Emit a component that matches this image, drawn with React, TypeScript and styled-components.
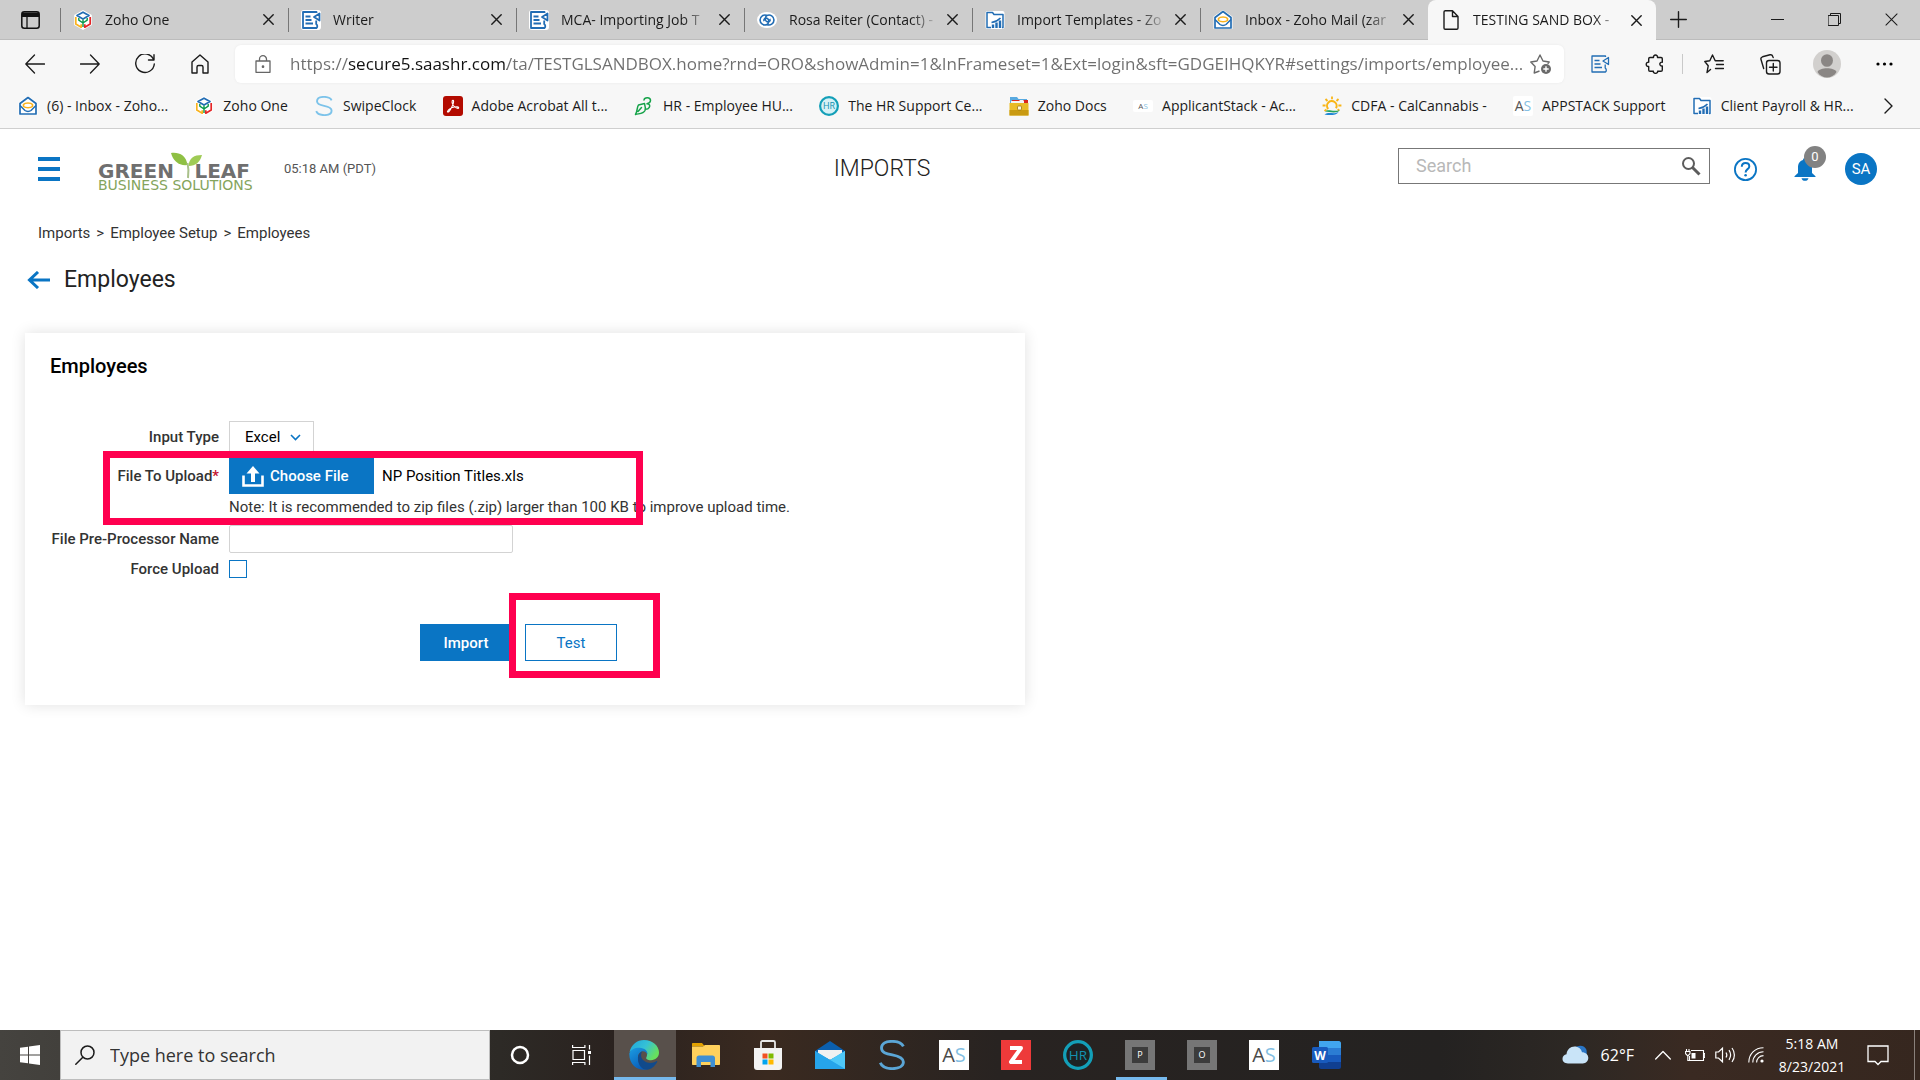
import React from "react";
import styled, { createGlobalStyle, css } from "styled-components";

const BLUE = "#0a75c4";
const UI = `"Open Sans", "Noto Sans", sans-serif`;
const APP = `Roboto, "Liberation Sans", sans-serif`;

const Global = createGlobalStyle`
  * { box-sizing: border-box; }
  body { margin: 0; background: #fff; font-family: ${APP}; }
  button, input, select { font: inherit; color: inherit; margin: 0; }
  button { padding: 0; border: 0; background: none; cursor: pointer; }
  svg { display: block; flex: none; }
`;

const Screen = styled.div`
  display: flex;
  flex-direction: column;
  min-height: 100vh;
`;

/* ---------- browser chrome ---------- */

const TabStrip = styled.div`
  display: flex;
  align-items: stretch;
  height: 40px;
  background: #cdcdcd;
  border-bottom: 1px solid #bcbcbc;
  font: 14px/20px ${UI};
  color: #1b1b1b;
`;

const TabActions = styled.button`
  flex: none;
  width: 60px;
  display: grid;
  place-items: center;
`;

const Tab = styled.div<{ $active?: boolean }>`
  flex: 0 1 228px;
  min-width: 0;
  display: flex;
  align-items: center;
  padding: 0 11px 0 13px;
  ${(p) =>
    p.$active
      ? css`
          background: #f7f7f7;
          border-radius: 8px 8px 0 0;
          margin-bottom: -1px;
        `
      : css`
          background: linear-gradient(#767676, #767676) 0 50% / 1px 24px no-repeat;
        `}
`;

const TabTitle = styled.span`
  flex: 1;
  min-width: 0;
  margin: 0 4px 0 12px;
  overflow: hidden;
  white-space: nowrap;
  mask-image: linear-gradient(90deg, #000 calc(100% - 28px), transparent);
`;

const TabClose = styled.button`
  display: grid;
  place-items: center;
  width: 18px;
  height: 20px;
`;

const NewTab = styled.button`
  width: 44px;
  display: grid;
  place-items: center;
`;

const WindowControls = styled.div`
  margin-left: auto;
  display: flex;
`;

const WindowButton = styled.button`
  width: 57px;
  display: grid;
  place-items: center;
`;

const Toolbar = styled.div`
  display: flex;
  align-items: center;
  height: 48px;
  padding: 0 11px 0 7px;
  background: #f7f7f7;
`;

const ToolButton = styled.button<{ $w?: number }>`
  flex: none;
  width: ${(p) => p.$w ?? 55}px;
  height: 40px;
  display: grid;
  place-items: center;
`;

const AddressBar = styled.div`
  flex: 1;
  min-width: 0;
  height: 38px;
  margin: 0 8px;
  display: flex;
  align-items: center;
  gap: 18px;
  padding: 0 12px 0 19px;
  background: #fff;
  border-radius: 6px;
  box-shadow: 0 0 3px rgba(0, 0, 0, 0.06);
`;

const AddressInput = styled.input`
  flex: 1;
  min-width: 0;
  height: 30px;
  margin-right: -14px;
  padding: 0;
  border: 0;
  outline: 0;
  font: 17px/30px ${UI};
  color: #6e6e6e;
  background: linear-gradient(90deg, #6e6e6e 58px, #111 58px, #111 217px, #6e6e6e 217px);
  background-clip: text;
  -webkit-text-fill-color: transparent;
`;

const ToolDivider = styled.span`
  width: 1px;
  height: 20px;
  background: #c9c9c9;
`;

const Bookmarks = styled.nav`
  display: flex;
  align-items: center;
  justify-content: space-between;
  height: 41px;
  padding: 0 24px 4px 18px;
  background: #f7f7f7;
  border-bottom: 1px solid #cfcfcf;
`;

const Bookmark = styled.a`
  display: flex;
  align-items: center;
  gap: 9px;
  font: 14px/20px ${UI};
  color: #1b1b1b;
  text-decoration: none;
  white-space: nowrap;
`;

/* ---------- application ---------- */

const Page = styled.div`
  flex: 1;
`;

const Header = styled.header`
  display: flex;
  align-items: center;
  justify-content: space-between;
  height: 80px;
  padding: 0 43px 0 38px;
`;

const HeaderLeft = styled.div`
  display: flex;
  align-items: center;
`;

const MenuButton = styled.button`
  width: 22px;
  height: 24px;
  margin-right: 38px;
  border-block: 4px solid ${BLUE};
  background: linear-gradient(${BLUE}, ${BLUE}) 0 50% / 100% 4px no-repeat;
`;

const Logo = styled.div`
  position: relative;
  width: 152px;
  margin-right: 34px;
  font-family: "DejaVu Sans", sans-serif;
`;

const LogoName = styled.div`
  display: flex;
  justify-content: space-between;
  padding-top: 15px;
  font-size: 20px;
  font-weight: 700;
  line-height: 16px;
  color: #6f6f6f;
`;

const LogoTag = styled.div`
  font-size: 14px;
  line-height: 12px;
  color: #84a45c;
  white-space: nowrap;
`;

const LogoLeaf = styled.svg`
  position: absolute;
  left: 72px;
  top: 4px;
`;

const Clock = styled.span`
  font-size: 13px;
  line-height: 20px;
  color: #555;
`;

const PageName = styled.h1`
  margin: 0;
  padding-right: 10px;
  font-size: 23px;
  font-weight: 300;
  line-height: 28px;
  color: #222;
`;

const HeaderRight = styled.div`
  display: flex;
  align-items: center;
  justify-content: flex-end;
`;

const SearchBox = styled.div`
  display: flex;
  align-items: center;
  width: 312px;
  height: 36px;
  margin: 0 24px 6px 0;
  padding: 0 8px 0 17px;
  border: 1px solid #777;
`;

const SearchInput = styled.input`
  flex: 1;
  min-width: 0;
  border: 0;
  outline: 0;
  padding: 0;
  font-size: 18px;
  line-height: 24px;
  background: none;
  &::placeholder {
    color: #b8b8b8;
  }
`;

const HeaderButton = styled.button`
  position: relative;
  display: grid;
  place-items: center;
`;

const BellButton = styled(HeaderButton)`
  margin: 0 29px 0 37px;
`;

const Badge = styled.span`
  position: absolute;
  left: 10px;
  top: -11px;
  width: 22px;
  height: 22px;
  border-radius: 50%;
  background: #828282;
  color: #fff;
  font-size: 13px;
  line-height: 22px;
  text-align: center;
`;

const Avatar = styled.button`
  width: 32px;
  height: 32px;
  border-radius: 50%;
  background: ${BLUE};
  color: #fff;
  font-size: 15px;
`;

const Crumbs = styled.nav`
  display: flex;
  gap: 6px;
  padding: 13px 38px 0;
  font-size: 15px;
  line-height: 22px;
  color: #333;
`;

const Crumb = styled.a`
  color: inherit;
  text-decoration: none;
`;

const TitleBar = styled.div`
  display: flex;
  align-items: center;
  gap: 14px;
  padding: 21px 27px 0;
`;

const Title = styled.h2`
  margin: 0;
  font-size: 23px;
  font-weight: 400;
  line-height: 30px;
  color: #222;
`;

const Card = styled.section`
  position: relative;
  width: 1000px;
  max-width: calc(100% - 50px);
  margin: 38px 25px 0;
  padding: 20px 25px 44px;
  background: #fff;
  box-shadow: 0 0 14px rgba(0, 0, 0, 0.12);
`;

const CardTitle = styled.h3`
  margin: 0 0 42px;
  font-size: 20px;
  font-weight: 500;
  line-height: 26px;
  color: #000;
`;

const Form = styled.form`
  display: grid;
  grid-template-columns: 169px auto;
  column-gap: 10px;
  justify-content: start;
  align-items: center;
  font-size: 15px;
  line-height: 20px;
`;

const Label = styled.label`
  text-align: right;
  font-weight: 500;
  color: #333;
  white-space: nowrap;
`;

const Required = styled.span`
  color: #c4122f;
`;

const SelectWrap = styled.div`
  position: relative;
  width: 85px;
  height: 32px;
`;

const Select = styled.select`
  appearance: none;
  width: 100%;
  height: 100%;
  padding: 0 0 0 15px;
  border: 1px solid #d3d3d3;
  border-radius: 0;
  background: #fff;
  color: #000;
`;

const SelectArrow = styled.svg`
  position: absolute;
  right: 13px;
  top: 13px;
  pointer-events: none;
`;

const FileRow = styled.div`
  display: flex;
  align-items: center;
  gap: 8px;
  padding: 5px 0;
  color: #000;
`;

const ChooseButton = styled.button`
  display: flex;
  align-items: center;
  gap: 6px;
  width: 145px;
  height: 36px;
  padding-left: 13px;
  background: ${BLUE};
  color: #fff;
  font-weight: 500;
`;

const Note = styled.p`
  grid-column: 2;
  margin: 0;
  padding-bottom: 10px;
  line-height: 16px;
  color: #333;
`;

const TextInput = styled.input`
  width: 284px;
  height: 28px;
  border: 1px solid #d3d3d3;
  border-radius: 2px;
`;

const CheckRow = styled.div`
  display: flex;
  align-items: center;
  height: 31px;
`;

const Check = styled.input`
  appearance: none;
  width: 18px;
  height: 18px;
  border: 1px solid ${BLUE};
`;

const Actions = styled.div`
  display: flex;
  gap: 13px;
  margin: 40px 0 0 370px;
`;

const ActionButton = styled.button<{ $primary?: boolean }>`
  width: 92px;
  height: 37px;
  border: 1px solid ${BLUE};
  background: ${(p) => (p.$primary ? BLUE : "#fff")};
  color: ${(p) => (p.$primary ? "#fff" : BLUE)};
  font-size: 15px;
  font-weight: ${(p) => (p.$primary ? 500 : 400)};
`;

const Highlight = styled.div<{ $x: number; $y: number; $w: number; $h: number }>`
  position: absolute;
  left: ${(p) => p.$x}px;
  top: ${(p) => p.$y}px;
  width: ${(p) => p.$w}px;
  height: ${(p) => p.$h}px;
  border: 7px solid #ff004f;
  pointer-events: none;
`;

/* ---------- taskbar ---------- */

const Taskbar = styled.footer`
  display: flex;
  align-items: stretch;
  height: 50px;
  background: linear-gradient(90deg, #45433f 0, #2d2a26 26%, #2a221f 32%, #3a2a20 40%, #282321 52%, #242221 75%, #2d2824 82%, #3a2a22 88%, #36271f 100%);
  color: #fff;
  font-family: ${UI};
`;

const StartButton = styled.button`
  flex: none;
  width: 60px;
  display: grid;
  place-items: center;
`;

const TaskSearch = styled.div`
  flex: 0 1 430px;
  min-width: 0;
  display: flex;
  align-items: center;
  gap: 15px;
  padding: 0 14px;
  background: #f2f2f2;
  border: 1px solid #bdbdbd;
`;

const TaskSearchInput = styled.input`
  flex: 1;
  min-width: 0;
  padding: 0;
  border: 0;
  outline: 0;
  background: none;
  font-size: 18px;
  line-height: 26px;
  &::placeholder {
    color: #333;
  }
`;

const TaskButton = styled.button<{ $state?: "active" | "open" }>`
  flex: none;
  width: 62px;
  padding-right: 2px;
  display: grid;
  place-items: center;
  background: ${(p) =>
    p.$state === "active"
      ? "linear-gradient(#76b9ed, #76b9ed) 0 100% / 100% 3px no-repeat #58504b"
      : p.$state === "open"
      ? "linear-gradient(#76b9ed, #76b9ed) 50% 100% / 51px 3px no-repeat"
      : "none"};
`;

const Tile = styled.span<{ $bg: string; $color?: string; $size?: number }>`
  display: grid;
  place-items: center;
  width: 30px;
  height: 30px;
  background: ${(p) => p.$bg};
  color: ${(p) => p.$color ?? "#fff"};
  font-size: ${(p) => p.$size ?? 18}px;
  line-height: 30px;
`;

const KeyCap = styled.span`
  display: grid;
  place-items: center;
  width: 16px;
  height: 16px;
  background: #3c3c3c;
  font-size: 9px;
  line-height: 16px;
`;

const Pale = styled.span`
  color: #85bfe3;
`;

const SmallAS = styled.span<{ $tiny?: boolean }>`
  display: block;
  width: 20px;
  background: #fff;
  border-radius: 2px;
  font-size: ${(p) => (p.$tiny ? 8 : 14)}px;
  line-height: ${(p) => (p.$tiny ? 12 : 20)}px;
  color: #555;
  text-align: center;
`;

const Tray = styled.div`
  margin-left: auto;
  display: flex;
  align-items: center;
  padding-right: 5px;
`;

const TrayButton = styled.button<{ $w: number }>`
  width: ${(p) => p.$w}px;
  height: 50px;
  display: grid;
  place-items: center;
`;

const Weather = styled.button`
  display: flex;
  align-items: center;
  gap: 12px;
  margin-right: 12px;
  font-size: 16px;
`;

const DateTime = styled.div`
  width: 80px;
  font-size: 14px;
  line-height: 23px;
  text-align: center;
`;

const TrayEdge = styled.span`
  align-self: stretch;
  width: 1px;
  margin-left: 10px;
  background: #8a817b;
`;

/* ---------- drawings ---------- */

const Line = ({ s = 20, w = 1, c = "#1b1b1b", box = 20, children }: any) => (
  <svg width={s} height={s} viewBox={`0 0 ${box} ${box}`} fill="none" stroke={c} strokeWidth={w} strokeLinecap="round" strokeLinejoin="round">
    {children}
  </svg>
);

const CloseIcon = ({ s = 11, w = 1.4 }: any) => (
  <Line s={s} box={11} w={w}>
    <path d="M.8.8l9.4 9.4M10.2.8L.8 10.2" />
  </Line>
);

const ZohoOne = () => (
  <svg width="20" height="20" viewBox="0 0 20 20" fill="none" strokeWidth="1.700" strokeLinejoin="round">
    <path d="M10 0l8.800 4.900v10.200L10 20l-8.800-4.900V4.900z" fill="#fff" />
    <path d="M4 5.600L10 2.200l6 3.400L10 9z" stroke="#226db4" />
    <path d="M2.800 7v7l5.400 3.200v-3" stroke="#f9b21d" />
    <path d="M17.200 7v7l-5.400 3.200v-3" stroke="#e42527" />
    <path d="M10 9.500V17M10 13L5.800 10.200V8M10 13l4.200-2.800V8" stroke="#089949" strokeWidth="1.400" />
  </svg>
);

const WriterIcon = ({ plain }: { plain?: boolean }) => (
  <svg width="20" height="20" viewBox="0 0 20 20" fill="none" stroke="#226db4" strokeWidth={plain ? 1.3 : 1.8} strokeLinejoin="round">
    {!plain && <rect x="0" y="0" width="20" height="20" rx="3" fill="#fff" stroke="none" />}
    <path d="M15.500 3V2H2v16h13.500c1.200-1 1-3-.3-4v-3.500" />
    <path d="M4.500 6.500h5M4.500 10h6M4.500 13.500h7.500" />
    <path d="M18.500 3.500v7L13 7z" />
  </svg>
);

const LinkIcon = () => (
  <svg width="20" height="20" viewBox="0 0 20 20" fill="none" stroke="#226db4" strokeWidth="1.600">
    <ellipse cx="10" cy="10" rx="10" ry="8" fill="#fff" stroke="none" />
    <path d="M10 5.400a5 5 0 1 0 0 9.200c1.800-1.200 2.500-4.500.6-6-2-1.300-4.400.4-3.400 2.600" />
    <path d="M10 14.600a5 5 0 1 0 0-9.200c-1.800 1.200-2.500 4.500-.6 6 2 1.300 4.400-.4 3.400-2.600" />
  </svg>
);

const FolderChart = () => (
  <svg width="20" height="20" viewBox="0 0 20 20" fill="none" stroke="#226db4" strokeWidth="1.500" strokeLinejoin="round">
    <rect x=".5" y="1" width="19" height="18" rx="2" fill="#fff" stroke="none" />
    <path d="M6 17.500H2v-15h5.500L9 4.500h9v13h-1" />
    <path d="M8 18v-3.500M11.500 18v-5.500M15 18v-7.500" strokeWidth="2.400" />
    <path d="M6.500 12.500c3.500-.5 6.500-2 9-4.500" strokeWidth="1.600" />
  </svg>
);

const MailIcon = () => (
  <svg width="20" height="20" viewBox="0 0 20 20" fill="none" strokeLinejoin="round">
    <path d="M10 0l9.500 6.500V19H.5V6.500z" fill="#fff" />
    <path d="M2 7.500l8-6 8 6V18H2z" stroke="#226db4" strokeWidth="1.700" />
    <path d="M2 9.500l5 5c1.500 1.200 4.500 1.200 6 0l5-5" stroke="#226db4" strokeWidth="1.500" />
    <path d="M5.500 10.500V8.500c1.500-2 7.500-2 9 0v2c-2 1.600-7 1.600-9 0z" stroke="#f9b21d" strokeWidth="1.600" />
  </svg>
);

const SwipeS = ({ s = 20, c = "#7cc3ea" }: any) => (
  <svg width={s} height={s} viewBox="0 0 20 20" fill="none" stroke={c} strokeWidth="1.900">
    <path d="M17.600 4.300C16.500 2 13.500.9 10 .9 6 .9 3 2.500 3 5.300c0 3 3 3.800 7.200 4.600 4.300.8 7.400 1.900 7.400 4.800 0 2.700-3 4.400-7.400 4.400-3.800 0-6.900-1.100-8-3.900" />
  </svg>
);

const Acrobat = () => (
  <svg width="20" height="20" viewBox="0 0 20 20">
    <rect width="20" height="20" rx="3" fill="#b30b00" />
    <path d="M4.500 15.500c1-2 4.300-4 7-4.500 2-.4 4.300-.2 4.200.8-.2 1-2.200.6-3.700-.7C10 9.400 8.800 6.500 9.200 5c.3-1 1.500-.8 1.400.6-.2 3-3 8.400-4.600 9.900-.8.800-1.800.6-1.500 0z" fill="none" stroke="#fff" strokeWidth="1.100" />
  </svg>
);

const HrHub = () => (
  <svg width="20" height="20" viewBox="0 0 20 20" fill="none" stroke="#16a34a" strokeWidth="1.500" strokeLinecap="round" strokeLinejoin="round">
    <path d="M10 4c.5-3 6.500-3 6.500.5 0 2-1.500 2.700-3.500 3.200 2.500.3 3.300 1.800 2.300 3.600-.8 1.400-2 1.900-3.600 1.900" />
    <path d="M10.500 7.500L4.500 9c-1.700 2-.8 6-3 9.500 3-1 8-.5 9.500-4 .8-2.200.2-4.500-.5-7zM7.500 11.500L4 15.500" />
  </svg>
);

const HrRound = ({ s = 20 }: any) => (
  <svg width={s} height={s} viewBox="0 0 20 20">
    <circle cx="10" cy="10" r="8.900" fill={s > 20 ? "#1d2224" : "#d6f1f6"} stroke="#139fb8" strokeWidth="2.200" />
    <text x="10" y="13.300" textAnchor="middle" fontFamily="Open Sans, sans-serif" fontSize="9" fill="#1391b0">HR</text>
  </svg>
);

const DocsFolder = () => (
  <svg width="20" height="20" viewBox="0 0 20 20">
    <path d="M1 1h7l1.500 2H18v6H1z" fill="#58a9e0" />
    <path d="M3 4h16v5H3z" fill="#d9261c" />
    <path d="M2 5h8l1-1h3l1 1v2H2z" fill="#f4f4f4" />
    <path d="M.5 7h19v12.500H.5z" fill="#e8bb25" />
    <path d="M.5 14h19v5.500H.5z" fill="#c99a12" />
    <rect x="8.500" y="10" width="4" height="4" rx="1" fill="#fff8dc" stroke="#9a7610" strokeWidth=".8" />
  </svg>
);

const SunIcon = () => (
  <svg width="20" height="20" viewBox="0 0 20 20" fill="none">
    <path d="M6.200 13a4.800 4.800 0 1 1 7.800-.8" stroke="#f9b515" strokeWidth="2" />
    <path d="M10 .5v2.700M3.500 3l2 2M16.500 3l-2 2M.6 9.500h3M16.400 9.500h3M2.500 15l2-1.500M17.300 14.500l-1.700-1.200" stroke="#f9b515" strokeWidth="1.800" />
    <path d="M3 15.500c4-3.200 7 1 15-1.500-3 4-10 2-15 1.500z" fill="#27a35a" />
    <path d="M2.500 18.500c5-3.500 8 .5 14-2.500-2 3.500-9 3.500-14 2.500z" fill="#1f86d6" />
  </svg>
);

const PageIcon = () => (
  <Line w={1.4}>
    <path d="M4 .8h7.500L17 6.500V18a1.200 1.200 0 0 1-1.200 1.200H4.200A1.200 1.200 0 0 1 3 18V2A1.200 1.200 0 0 1 4.200.8M11.500.8v5.700H17" />
  </Line>
);

const EdgeLogo = () => (
  <svg width="30" height="30" viewBox="0 0 30 30">
    <defs>
      <linearGradient id="edgeTop" x1="0" y1="0" x2="1" y2="0.5">
        <stop offset="0" stopColor="#1ea6dc" />
        <stop offset=".55" stopColor="#35c1d6" />
        <stop offset="1" stopColor="#67e05d" />
      </linearGradient>
      <linearGradient id="edgeBody" x1="0" y1="0" x2="0.6" y2="1">
        <stop offset="0" stopColor="#1b9de2" />
        <stop offset="1" stopColor="#0a5cb8" />
      </linearGradient>
    </defs>
    <path d="M.6 12C2.200 4.600 8.200 0 15 0c8.500 0 15 5.800 15 12.600 0 4.700-3.700 7.600-8 7.600-3.500 0-5.300-1.300-4.700-2.700 1.600-2.500 1.200-8-5.800-8-4.500 0-8.600 1.600-10.900 2.500z" fill="url(#edgeTop)" />
    <path d="M.3 13.500C1.500 9.500 6 7.500 10.500 7.700c5.500.2 8.300 3.500 8 7-.6-2.600-3.500-4-6-3.200-2.500.9-4 4-3.500 7.500.8 5.500 5.500 9.800 10 10-7 2.600-19-1.500-18.700-15.500z" fill="url(#edgeBody)" />
    <path d="M9 17.500c.5-3.700 2.500-5.700 4.500-6-2.200 2-2 6.500 1.500 9.300 3.700 3 9 2.700 12.200.5.900-.6 1.300-.1.900.7C25.500 26.800 21.500 30 17 29.600 11.500 29 8.500 23 9 17.500z" fill="#114a8b" />
  </svg>
);

const Explorer = () => (
  <svg width="28" height="24" viewBox="0 0 28 24">
    <path d="M0 1c0-.6.400-1 1-1h9l3 3.500H0z" fill="#e2a100" />
    <path d="M0 3.500h11L13 2h14c.6 0 1 .4 1 1v18c0 .6-.4 1-1 1H1c-.6 0-1-.4-1-1z" fill="#ffd15c" />
    <path d="M4.500 24V15c0-1.500 1-2.500 2.500-2.500h13.500c1.500 0 2.500 1 2.500 2.500v9h-4.500v-5h-9.500v5z" fill="#3f8fd2" />
  </svg>
);

const Store = () => (
  <svg width="28" height="30" viewBox="0 0 28 30">
    <path d="M7 10V2.500C7 1.500 7.500 1 8.500 1h11c1 0 1.500.5 1.500 1.500V10" fill="none" stroke="#e9e9e9" strokeWidth="1.800" />
    <path d="M0 8h28v19c0 2-1 3-3 3H3c-2 0-3-1-3-3z" fill="#f3f3f3" />
    <path d="M8.500 13.500h5v5h-5z" fill="#f25022" />
    <path d="M14.500 13.500h5v5h-5z" fill="#7fba00" />
    <path d="M8.500 19.500h5v5h-5z" fill="#00a4ef" />
    <path d="M14.500 19.500h5v5h-5z" fill="#ffb900" />
  </svg>
);

const MailApp = () => (
  <svg width="30" height="28" viewBox="0 0 30 28">
    <path d="M15 0l15 10v4H0v-4z" fill="#0b5fae" />
    <path d="M3 9h24v4l-12 6L3 13z" fill="#f1f1f1" />
    <path d="M0 10l15 9 15-9v18H0z" fill="#2fb3f2" />
    <path d="M15 19l15-9v18z" fill="#4fc8f8" />
    <path d="M15 19l15 9H0V10z" fill="#26a4ea" />
  </svg>
);

const WordApp = () => (
  <svg width="29" height="28" viewBox="0 0 29 28">
    <path d="M7 0h20c1 0 2 1 2 2v5H7z" fill="#41a5ee" />
    <path d="M7 7h22v7H7z" fill="#2b7cd3" />
    <path d="M7 14h22v7H7z" fill="#185abd" />
    <path d="M7 21h22v5c0 1-1 2-2 2H9c-1 0-2-1-2-2z" fill="#103f91" />
    <rect y="6" width="16" height="16" rx="1.500" fill="#185abd" />
    <text x="8" y="18.500" textAnchor="middle" fontFamily="Open Sans, sans-serif" fontWeight="700" fontSize="12" fill="#fff">W</text>
  </svg>
);

const tabs = [
  { title: "Zoho One", icon: <ZohoOne /> },
  { title: "Writer", icon: <WriterIcon /> },
  { title: "MCA- Importing Job T", icon: <WriterIcon /> },
  { title: "Rosa Reiter (Contact) -", icon: <LinkIcon /> },
  { title: "Import Templates - Zo", icon: <FolderChart /> },
  { title: "Inbox - Zoho Mail (zar", icon: <MailIcon /> },
  { title: "TESTING SAND BOX -", icon: <PageIcon />, active: true },
];

const bookmarks = [
  { title: "(6) - Inbox - Zoho...", icon: <MailIcon /> },
  { title: "Zoho One", icon: <ZohoOne /> },
  { title: "SwipeClock", icon: <SwipeS /> },
  { title: "Adobe Acrobat All t...", icon: <Acrobat /> },
  { title: "HR - Employee HU...", icon: <HrHub /> },
  { title: "The HR Support Ce...", icon: <HrRound /> },
  { title: "Zoho Docs", icon: <DocsFolder /> },
  { title: "ApplicantStack - Ac...", icon: <SmallAS $tiny>A<Pale>S</Pale></SmallAS> },
  { title: "CDFA - CalCannabis -", icon: <SunIcon /> },
  { title: "APPSTACK Support", icon: <SmallAS>A<Pale>S</Pale></SmallAS> },
  { title: "Client Payroll & HR...", icon: <FolderChart /> },
];

const asTile = (
  <Tile $bg="#fff" $color="#4a4a4a" $size={20}>
    <span>A<Pale>S</Pale></span>
  </Tile>
);

const taskApps: { name: string; icon: React.ReactNode; state?: "active" | "open" }[] = [
  { name: "Microsoft Edge", icon: <EdgeLogo />, state: "active" },
  { name: "File Explorer", icon: <Explorer /> },
  { name: "Microsoft Store", icon: <Store /> },
  { name: "Mail", icon: <MailApp /> },
  { name: "SwipeClock", icon: <SwipeS s={30} c="#5ba6d6" /> },
  { name: "ApplicantStack", icon: asTile },
  {
    name: "Zoho",
    icon: (
      <Tile $bg="#ee3a3a">
        <svg width="16" height="20" viewBox="0 0 16 20" fill="none" stroke="#fff" strokeWidth="4" strokeLinejoin="round">
          <path d="M2 3h11L3 17h11" />
        </svg>
      </Tile>
    ),
  },
  { name: "HR Support Center", icon: <HrRound s={30} /> },
  { name: "Payroll", icon: <Tile $bg="#767676"><KeyCap>P</KeyCap></Tile>, state: "open" },
  { name: "Onboarding", icon: <Tile $bg="#767676"><KeyCap>O</KeyCap></Tile> },
  { name: "ApplicantStack Support", icon: asTile },
  { name: "Word", icon: <WordApp /> },
];

export default function App() {
  return (
    <Screen>
      <Global />

      <TabStrip>
        <TabActions aria-label="Tab actions">
          <svg width="19" height="18" viewBox="0 0 19 18">
            <rect x=".8" y=".8" width="17.400" height="16.400" rx="2.500" fill="none" stroke="#111" strokeWidth="1.500" />
            <path d="M1 1.500h17V6H1z" fill="#111" />
            <path d="M6 6v11" stroke="#111" strokeWidth="1.300" />
          </svg>
        </TabActions>
        {tabs.map((t) => (
          <Tab key={t.title} $active={t.active}>
            {t.icon}
            <TabTitle>{t.title}</TabTitle>
            <TabClose aria-label={`Close ${t.title}`}><CloseIcon /></TabClose>
          </Tab>
        ))}
        <NewTab aria-label="New tab">
          <Line s={17} box={17} w={1.4}><path d="M8.500.7v15.600M.7 8.500h15.600" /></Line>
        </NewTab>
        <WindowControls>
          <WindowButton aria-label="Minimize"><Line s={13} box={13}><path d="M0 6.500h13" /></Line></WindowButton>
          <WindowButton aria-label="Restore">
            <Line s={13} box={13}><path d="M.5 2.500h10v10H.5zM2.500 2.500v-2h10v10h-2" /></Line>
          </WindowButton>
          <WindowButton aria-label="Close window"><CloseIcon s={13} w={0.9} /></WindowButton>
        </WindowControls>
      </TabStrip>

      <Toolbar>
        <ToolButton aria-label="Back"><Line s={20} w={1.3}><path d="M19.500 10H.8M9.500 1L.8 10l8.700 9" /></Line></ToolButton>
        <ToolButton aria-label="Forward"><Line s={20} w={1.3}><path d="M.5 10h18.700M10.500 1l8.700 9-8.700 9" /></Line></ToolButton>
        <ToolButton aria-label="Refresh"><Line s={20} w={1.4}><path d="M18.600 5.500A9.300 9.300 0 1 0 19.300 10M19 .8v5.200h-5.500" /></Line></ToolButton>
        <ToolButton aria-label="Home">
          <Line s={20} w={1.4}><path d="M2 8l8-7 8 7v11h-5v-6c0-1-.6-1.500-1.500-1.500h-3C7.600 11.500 7 12 7 13v6H2z" /></Line>
        </ToolButton>
        <AddressBar>
          <Line s={18} w={1.3} c="#666" box={18}>
            <path d="M2 6h14v11.300H2zM5.500 6V4.200a3.500 3.500 0 0 1 7 0V6" />
            <circle cx="9" cy="11.700" r=".7" fill="#666" />
          </Line>
          <AddressInput
            aria-label="Address"
            defaultValue="https://secure5.saashr.com/ta/TESTGLSANDBOX.home?rnd=ORO&showAdmin=1&InFrameset=1&Ext=login&sft=GDGEIHQKYR#settings/imports/employee..."
          />
          <svg width="22" height="20" viewBox="0 0 22 20" fill="none" stroke="#6a6a6a" strokeWidth="1.400" strokeLinejoin="round">
            <path d="M9.500 17L4.200 19l.9-6.400L.8 8l6.200-1L10 1l3 6 6.200 1-1.500 1.700" />
            <circle cx="16" cy="15" r="5" fill="#6a6a6a" stroke="none" />
            <path d="M16 12.300v5.400M13.300 15h5.400" stroke="#fff" />
          </svg>
        </AddressBar>
        <ToolButton aria-label="Writer extension"><WriterIcon plain /></ToolButton>
        <ToolButton aria-label="Extensions">
          <Line s={20} w={1.4}>
            <path d="M5 3.500h3.500c-.6-3.300 4.600-3.300 4 0H16c.8 0 1.300.5 1.300 1.300v3.400c-3.300-.5-3.300 4.300 0 3.800v4c0 .8-.5 1.300-1.300 1.300h-3.400c.5 2.700-4.700 2.700-4.200 0H5c-.8 0-1.300-.5-1.300-1.300v-3.600c-3.300.5-3.300-4.700 0-4.200V4.800c0-.8.5-1.300 1.300-1.300z" />
          </Line>
        </ToolButton>
        <ToolDivider />
        <ToolButton $w={62} aria-label="Favorites">
          <Line s={20} w={1.4}><path d="M6.500 15.500L3 18.500l1.200-6.700L.8 7.500l5-.7L8.500 1l2.700 5.800h8M12.500 10.500h7M11.500 14.500h8" /></Line>
        </ToolButton>
        <ToolButton $w={50} aria-label="Collections">
          <Line s={21} w={1.4} box={21}>
            <rect x="6.500" y="6.500" width="13.500" height="13.500" rx="2.500" />
            <path d="M13.300 9.500v7.500M9.500 13.300h7.500M3.700 14.500L1 5.500c-.4-1.400.3-2.300 1.500-2.700l7.500-2c1.300-.3 2.300.2 2.800 1.700l.4 1" />
          </Line>
        </ToolButton>
        <ToolButton $w={64} aria-label="Profile">
          <svg width="28" height="28" viewBox="0 0 28 28">
            <circle cx="14" cy="14" r="14" fill="#d2d0ce" />
            <ellipse cx="14" cy="10.500" rx="6" ry="6.300" fill="#8a8684" />
            <path d="M4.500 22c2-5 17-5 19 0-4 7.300-15 7.300-19 0z" fill="#8a8684" />
          </svg>
        </ToolButton>
        <ToolButton $w={50} aria-label="Settings and more">
          <svg width="17" height="4" viewBox="0 0 17 4"><circle cx="2" cy="2" r="1.600" /><circle cx="8.500" cy="2" r="1.600" /><circle cx="15" cy="2" r="1.600" /></svg>
        </ToolButton>
      </Toolbar>

      <Bookmarks aria-label="Favorites bar">
        {bookmarks.map((b) => (
          <Bookmark key={b.title} href="#">
            {b.icon}
            {b.title}
          </Bookmark>
        ))}
        <button aria-label="More favorites">
          <Line s={16} w={1.4} box={16}><path d="M5 1l7 7-7 7" /></Line>
        </button>
      </Bookmarks>

      <Page>
        <Header>
          <HeaderLeft>
            <MenuButton aria-label="Menu" />
            <Logo>
              <LogoLeaf width="34" height="32" viewBox="0 0 34 32">
                <path d="M1 1c8-1 15 2 16.500 12C9 14 3 9 1 1z" fill="#8fc044" />
                <path d="M32 3c-8 0-13 3-13.500 11C26 14 30 10 32 3z" fill="#9fcb55" />
                <path d="M17.500 11c1.200 5 1.200 10 .5 15" fill="none" stroke="#a9c08a" strokeWidth="2" />
              </LogoLeaf>
              <LogoName><span>GREEN</span><span>LEAF</span></LogoName>
              <LogoTag>BUSINESS SOLUTIONS</LogoTag>
            </Logo>
            <Clock>05:18 AM (PDT)</Clock>
          </HeaderLeft>
          <PageName>IMPORTS</PageName>
          <HeaderRight>
            <SearchBox>
              <SearchInput type="search" placeholder="Search" aria-label="Search" />
              <svg width="20" height="20" viewBox="0 0 20 20" fill="none" stroke="#5c5c5c">
                <circle cx="7.500" cy="7.500" r="5.500" strokeWidth="2" />
                <path d="M11.500 11.500l7 7" strokeWidth="3" />
              </svg>
            </SearchBox>
            <HeaderButton aria-label="Help">
              <svg width="23" height="23" viewBox="0 0 23 23" fill="none" stroke={BLUE} strokeWidth="1.800">
                <circle cx="11.500" cy="11.500" r="10.600" />
                <path d="M7.800 8.800c0-2.300 1.600-3.700 3.800-3.700s3.700 1.300 3.700 3.300c0 2.700-3.700 2.800-3.700 6" strokeWidth="2" />
                <circle cx="11.600" cy="17.300" r="1.300" fill={BLUE} stroke="none" />
              </svg>
            </HeaderButton>
            <BellButton aria-label="Notifications">
              <svg width="22" height="24" viewBox="0 0 22 24" fill={BLUE}>
                <path d="M11 1c1.200 0 2 .8 2 2 3.500 1 5 4 5 7.500V16l3.500 3.300V20H.5v-.7L4 16v-5.500C4 7 5.500 4 9 3c0-1.200.8-2 2-2zM7.500 21.200h7c-.5 3.400-6.500 3.400-7 0z" />
              </svg>
              <Badge>0</Badge>
            </BellButton>
            <Avatar aria-label="Account">SA</Avatar>
          </HeaderRight>
        </Header>

        <Crumbs aria-label="Breadcrumb">
          <Crumb href="#">Imports</Crumb>
          <span>&gt;</span>
          <Crumb href="#">Employee Setup</Crumb>
          <span>&gt;</span>
          <Crumb href="#">Employees</Crumb>
        </Crumbs>

        <TitleBar>
          <button aria-label="Back to imports">
            <svg width="23" height="18" viewBox="0 0 23 18" fill="none" stroke={BLUE} strokeWidth="3">
              <path d="M23 9H3M11 1L2.500 9l8.500 8" />
            </svg>
          </button>
          <Title>Employees</Title>
        </TitleBar>

        <Card>
          <CardTitle>Employees</CardTitle>
          <Form onSubmit={(e) => e.preventDefault()}>
            <Label htmlFor="input-type">Input Type</Label>
            <SelectWrap>
              <Select id="input-type" defaultValue="Excel">
                <option>Excel</option>
              </Select>
              <SelectArrow width="11" height="7" viewBox="0 0 11 7" fill="none" stroke={BLUE} strokeWidth="1.600">
                <path d="M1 1l4.500 4.500L10 1" />
              </SelectArrow>
            </SelectWrap>

            <Label htmlFor="file">File To Upload<Required>*</Required></Label>
            <FileRow>
              <ChooseButton id="file" type="button">
                <svg width="22" height="21" viewBox="0 0 22 21" fill="none" stroke="#fff" strokeWidth="2.600">
                  <path d="M1.500 9.500v10h19v-10" />
                  <path d="M11 16V6" strokeWidth="4" />
                  <path d="M4.500 7.500L11 0l6.500 7.500z" fill="#fff" stroke="none" />
                </svg>
                Choose File
              </ChooseButton>
              <span>NP Position Titles.xls</span>
            </FileRow>
            <Note>Note: It is recommended to zip files (.zip) larger than 100 KB to improve upload time.</Note>

            <Label htmlFor="preprocessor">File Pre-Processor Name</Label>
            <TextInput id="preprocessor" type="text" />

            <Label htmlFor="force">Force Upload</Label>
            <CheckRow>
              <Check id="force" type="checkbox" />
            </CheckRow>
          </Form>
          <Actions>
            <ActionButton $primary type="button">Import</ActionButton>
            <ActionButton type="button">Test</ActionButton>
          </Actions>
          <Highlight $x={78} $y={118} $w={540} $h={74} />
          <Highlight $x={484} $y={260} $w={151} $h={85} />
        </Card>
      </Page>

      <Taskbar>
        <StartButton aria-label="Start">
          <svg width="20" height="20" viewBox="0 0 20 20" fill="#fff">
            <path d="M0 2.800l8-1.100v7.800H0zM9 1.500L20 0v9.500H9zM0 10.500h8v7.800l-8-1.100zM9 10.500h11V20L9 18.500z" />
          </svg>
        </StartButton>
        <TaskSearch>
          <Line s={20} w={1.5}><circle cx="12.500" cy="7.500" r="6.500" /><path d="M7.800 12.200L.8 19.200" /></Line>
          <TaskSearchInput placeholder="Type here to search" aria-label="Type here to search" />
        </TaskSearch>
        <TaskButton aria-label="Cortana">
          <svg width="20" height="20" viewBox="0 0 20 20" fill="none" stroke="#fff" strokeWidth="2.500"><circle cx="10" cy="10" r="8" /></svg>
        </TaskButton>
        <TaskButton aria-label="Task View">
          <svg width="20" height="20" viewBox="0 0 20 20" fill="none" stroke="#fff" strokeWidth="1.200">
            <path d="M1 5.500h11.500v9H1zM.6 0v2.500h12.300V0M.6 20v-2.500h12.300V20M17.500 0v4.500M17.500 10.500V20" />
            <path d="M16 6h3v3h-3z" fill="#fff" stroke="none" />
          </svg>
        </TaskButton>
        {taskApps.map((a) => (
          <TaskButton key={a.name} $state={a.state} aria-label={a.name}>{a.icon}</TaskButton>
        ))}
        <Tray>
          <Weather>
            <svg width="27" height="20" viewBox="0 0 27 20">
              <path d="M13 3c3-3.500 10-3 11.500 2 .5 3 0 6-1 8L14 10z" fill="#2a76c6" />
              <path d="M6 18.500C2.500 18.500.5 16.500.5 13.800c0-2.600 1.800-4.300 4-4.600C5 4.500 8.500 1.500 12.500 1.500c3.800 0 6.700 2.300 7.500 5.700 3.500 0 6.300 2.300 6.300 5.600 0 3.200-2.300 5.700-5.500 5.700z" fill="#c9e4f8" />
            </svg>
            62°F
          </Weather>
          <TrayButton $w={34} aria-label="Hidden icons"><Line s={16} w={1.3} c="#fff" box={16}><path d="M.7 12L8 4.500l7.300 7.500" /></Line></TrayButton>
          <TrayButton $w={30} aria-label="Battery">
            <svg width="20" height="14" viewBox="0 0 20 14" fill="none" stroke="#fff" strokeWidth="1.100">
              <path d="M6 2.500h12.500v10H4.500V8M18.500 5.500h1.200v4h-1.200M.6 3.500h4.400v2.200L2.800 8 .6 5.700zM1.500 3.500V1M4 3.500V1M2.800 8v4.500h2" />
              <path d="M6.500 5h4v5.500h-4z" fill="#fff" stroke="none" />
            </svg>
          </TrayButton>
          <TrayButton $w={30} aria-label="Volume">
            <svg width="21" height="18" viewBox="0 0 21 18" fill="none" stroke="#fff" strokeWidth="1.200">
              <path d="M.8 6h2.700l4-3.800v13.600l-4-3.800H.8zM11 6.500c1 1.500 1 3.500 0 5M14 4.200c2 3 2 6.600 0 9.600M17 2c3.200 4.200 3.200 9.800 0 14" />
            </svg>
          </TrayButton>
          <TrayButton $w={32} aria-label="Network">
            <svg width="16" height="16" viewBox="0 0 16 16" fill="none" stroke="#fff" strokeWidth="1.100">
              <path d="M.8 15.500C.8 7 7 .8 15.500.8M4.800 15.500c0-6 4.700-10.700 10.700-10.700M8.600 15.500c0-4 3-6.900 6.900-6.900" />
              <circle cx="14" cy="14" r="1.600" fill="#fff" stroke="none" />
            </svg>
          </TrayButton>
          <DateTime>5:18 AM<br />8/23/2021</DateTime>
          <TrayButton $w={52} aria-label="Notifications center">
            <svg width="22" height="21" viewBox="0 0 22 21" fill="none" stroke="#fff" strokeWidth="1.300">
              <path d="M1 1h20v15.500h-7l-3 3-3-3H1z" />
            </svg>
          </TrayButton>
          <TrayEdge />
        </Tray>
      </Taskbar>
    </Screen>
  );
}
